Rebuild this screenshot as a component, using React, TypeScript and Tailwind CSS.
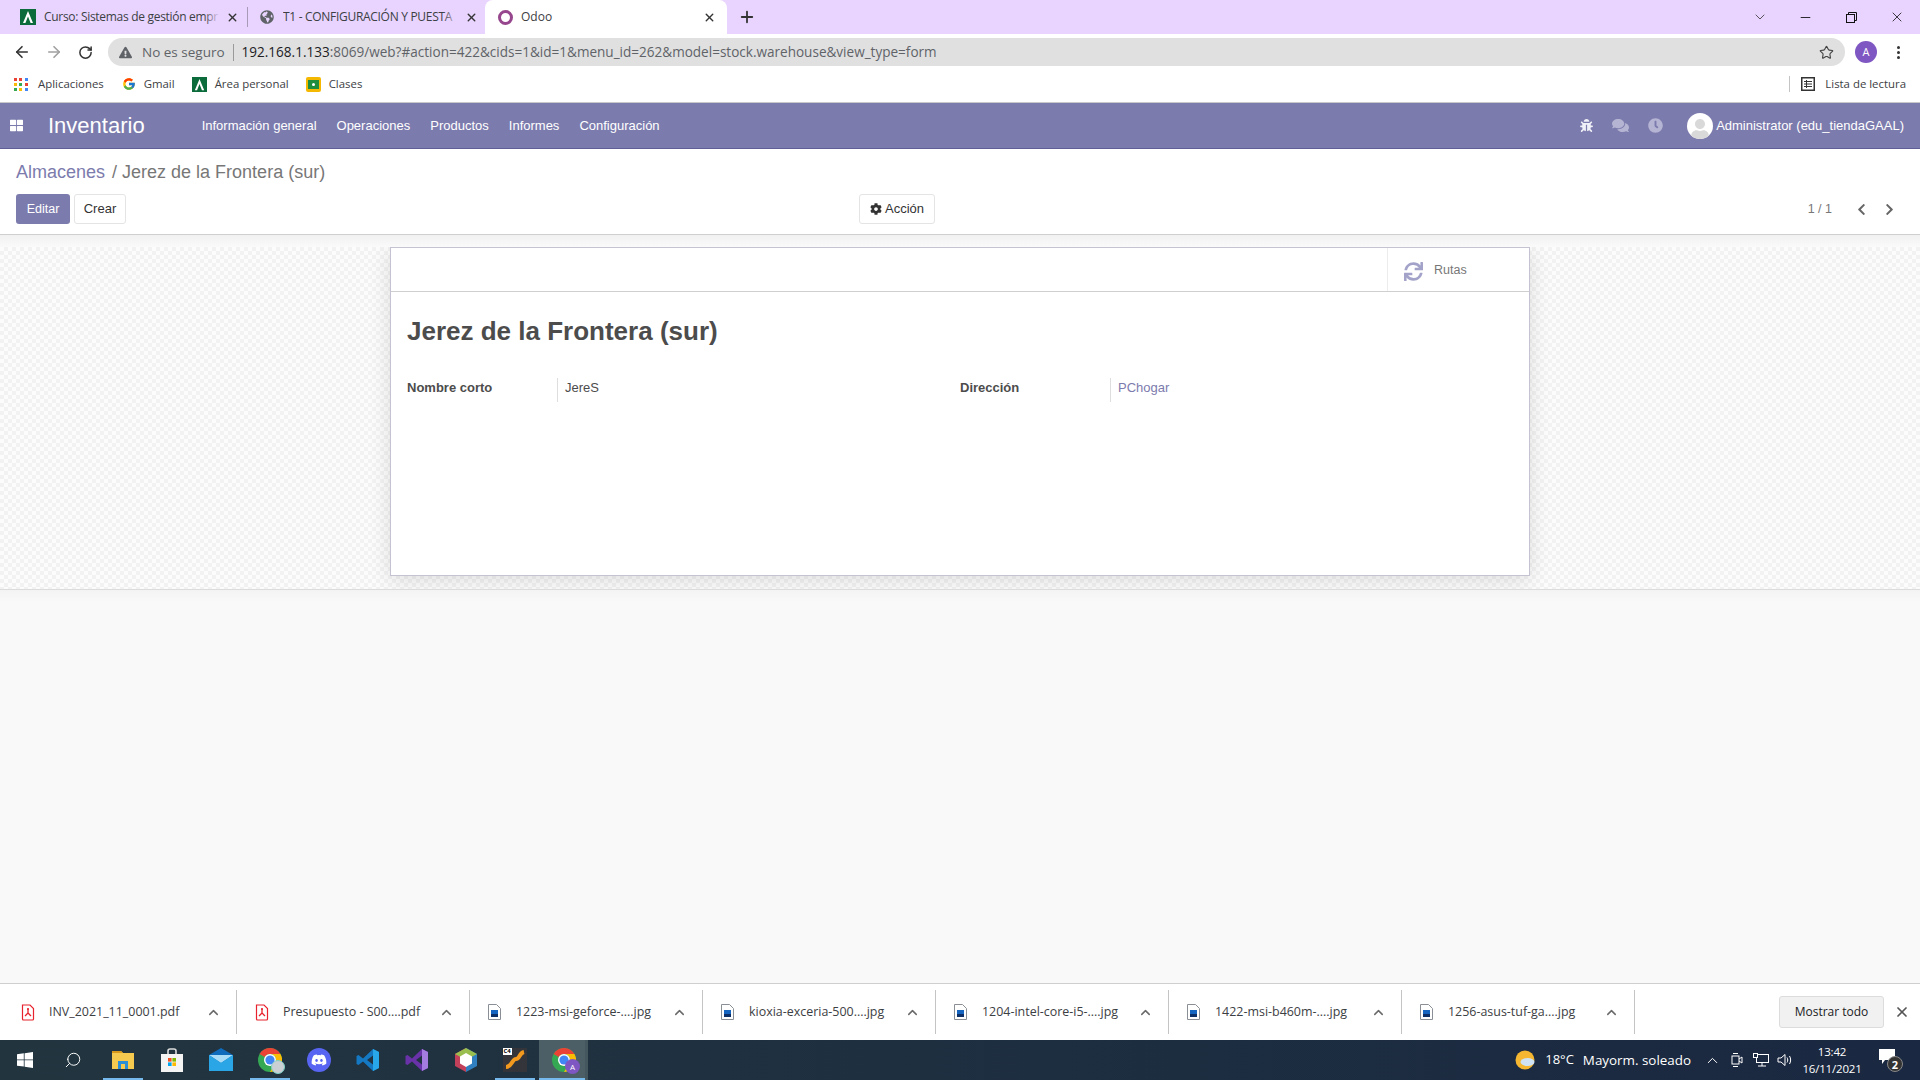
import { ChevronDown, ChevronUp, Minus, X, ArrowLeft, ArrowRight, RotateCw, Star, Plus, Search } from 'lucide-react';
import { FaBug, FaComments, FaClock, FaCog, FaSync, FaThLarge, FaChevronLeft, FaChevronRight, FaDiscord, FaUser, FaExclamationTriangle, FaGlobeAmericas } from 'react-icons/fa';
import { FcGoogle } from 'react-icons/fc';

const chrome = { fontFamily: '"Open Sans", "Noto Sans", sans-serif' };

const AulaIcon = ({ size = 16 }: { size?: number }) => (
  <svg width={size} height={size} viewBox="0 0 16 16">
    <rect width="16" height="16" fill="#0b6b3a" />
    <path d="M8 2 L13 14 H10.6 L8 7.5 L5.4 14 H3 Z" fill="#fff" />
  </svg>
);

const Tab = ({ icon, title, className }: { icon: React.ReactNode; title: string; className: string }) => (
  <div className={className}>
    <span className="mr-[8px] flex w-[16px] shrink-0 justify-center">{icon}</span>
    <span className="relative flex-1 overflow-hidden whitespace-nowrap text-[12px] tracking-[-0.3px] text-[#3c4043]">
      {title}
      <span className="absolute bottom-0 right-0 top-0 w-[16px] bg-gradient-to-r from-transparent to-[#e8d4ff]" />
    </span>
    <X size={13} strokeWidth={2.6} className="ml-[6px] shrink-0 text-[#333]" />
  </div>
);

const PdfIcon = () => (
  <svg width="14" height="17" viewBox="0 0 14 17" fill="none">
    <path d="M1.5 1 H9 L12.5 4.5 V15 a1 1 0 0 1 -1 1 H2.5 a1 1 0 0 1 -1 -1 Z" stroke="#e8222c" strokeWidth="1.2" fill="#fff" />
    <path d="M7 4.5 L7 9 M7 9 L4 12 M7 9 L10 12" stroke="#e8222c" strokeWidth="1.3" />
    <circle cx="7" cy="5" r="1" fill="#e8222c" />
  </svg>
);

const ImageFileIcon = () => (
  <svg width="13" height="16" viewBox="0 0 13 16" fill="none">
    <path d="M0.5 0.5 H8.5 L12.5 4.5 V15.5 H0.5 Z" fill="#fff" stroke="#8a8f96" />
    <rect x="3" y="6" width="7" height="7" fill="#1565c0" />
    <rect x="3" y="10" width="7" height="3" fill="#0b2f66" />
  </svg>
);

const DownloadItem = ({ name, pdf, first }: { name: string; pdf?: boolean; first?: boolean }) => (
  <div className={first ? 'flex h-[44px] w-[237px] shrink-0 items-center border-r border-[#c4c4c4] pl-[21px] pr-[15px]' : 'flex h-[44px] w-[233px] shrink-0 items-center border-r border-[#c4c4c4] pl-[18px] pr-[15px]'}>
    <span className={first ? 'flex w-[28px] shrink-0' : 'flex w-[28px] shrink-0'}>{pdf ? <PdfIcon /> : <ImageFileIcon />}</span>
    <span className="flex-1 whitespace-nowrap text-[12.45px] text-[#3c4043]">{name}</span>
    <ChevronUp size={15} strokeWidth={2.4} className="text-[#6a6a6a]" />
  </div>
);

const ChromeLogo = ({ children }: { children?: React.ReactNode }) => (
  <span className="relative block h-[24px] w-[24px]">
    <svg width="24" height="24" viewBox="0 0 24 24">
      <circle cx="12" cy="12" r="12" fill="#34a853" />
      <path d="M1.6 6 A12 12 0 0 1 22.4 6 H12 A6 6 0 0 0 6.8 9 Z" fill="#ea4335" />
      <path d="M22.4 6 A12 12 0 0 1 12 24 L17.2 15 A6 6 0 0 0 12 6 Z" fill="#fbbc05" />
      <circle cx="12" cy="12" r="6" fill="#fff" />
      <circle cx="12" cy="12" r="4.6" fill="#4285f4" />
    </svg>
    {children}
  </span>
);

const TaskbarSlot = ({ children, open }: { children: React.ReactNode; open?: boolean }) => (
  <div className="relative flex h-[40px] w-[49px] items-center justify-center">
    {children}
    {open && <span className="absolute bottom-0 left-[5px] right-[4px] h-[2px] bg-[#76b9ed]" />}
  </div>
);

export default function App() {
  return (
    <div className="flex h-[1080px] w-[1920px] flex-col overflow-hidden bg-[#f9f9f9]" style={chrome}>
      {/* tab strip */}
      <div className="flex h-[34px] shrink-0 items-center bg-[#e8d4ff]">
        <Tab className="flex h-[34px] w-[247px] items-center pl-[20px] pr-[8px]" icon={<AulaIcon />} title="Curso: Sistemas de gestión empr" />
        <div className="h-[20px] w-px bg-[#a99bb8]" />
        <Tab className="flex h-[34px] w-[237px] items-center pl-[11px] pr-[7px]" icon={<FaGlobeAmericas size={14} className="text-[#5f6368]" />} title="T1 - CONFIGURACIÓN Y PUESTA" />
        <div className="flex h-[34px] w-[242px] items-center rounded-t-lg bg-white pl-[12px] pr-[11px]">
          <span className="mr-[8px] flex w-[16px] shrink-0 justify-center">
            <span className="block h-[15px] w-[15px] rounded-full border-[3px] border-[#96468c]" />
          </span>
          <span className="flex-1 text-[12px] text-[#3c4043]">Odoo</span>
          <X size={13} strokeWidth={2.6} className="text-[#333]" />
        </div>
        <Plus size={18} strokeWidth={2.4} className="ml-[11px] text-[#333]" />
        <div className="flex-1" />
        <ChevronDown size={16} strokeWidth={1.2} className="mr-[30px] text-[#333]" />
        <Minus size={15} strokeWidth={1.4} className="mr-[33px] text-[#111]" />
        <svg width="11" height="11" viewBox="0 0 11 11" fill="none" stroke="#111" className="mr-[32px]">
          <rect x="0.5" y="2.5" width="8" height="8" />
          <path d="M2.5 2.5 V0.5 H10.5 V8.5 H8.5" />
        </svg>
        <X size={16} strokeWidth={1.2} className="mr-[15px] text-[#111]" />
      </div>

      {/* toolbar */}
      <div className="flex h-[34px] shrink-0 items-center bg-white pt-[2px]">
        <ArrowLeft size={18} strokeWidth={2.2} className="ml-[13px] text-[#333]" />
        <ArrowRight size={18} strokeWidth={2.2} className="ml-[14px] text-[#a0a0a0]" />
        <RotateCw size={15} strokeWidth={2.4} className="ml-[15px] text-[#333]" />
        <div className="ml-[15px] flex h-[28px] w-[1737px] items-center rounded-full bg-[#e0e0e0] pl-[11px] pr-[11px]">
          <FaExclamationTriangle size={13} className="text-[#5f6368]" />
          <span className="ml-[10px] text-[13.5px] text-[#5f6368]">No es seguro</span>
          <span className="ml-[8px] h-[17px] w-px bg-[#9a9a9a]" />
          <span className="ml-[8px] flex-1 whitespace-nowrap text-[13.55px] text-[#5f6368]">
            <span className="text-[#202124]">192.168.1.133</span>:8069/web?#action=422&cids=1&id=1&menu_id=262&model=stock.warehouse&view_type=form
          </span>
          <Star size={15} strokeWidth={1.8} className="text-[#444]" />
        </div>
        <div className="ml-[10px] flex h-[22px] w-[22px] items-center justify-center rounded-full bg-[#7e57c2] text-[11px] text-white">A</div>
        <div className="ml-[20px] flex flex-col gap-[2px]">
          <span className="h-[3px] w-[3px] rounded-full bg-[#333]" />
          <span className="h-[3px] w-[3px] rounded-full bg-[#333]" />
          <span className="h-[3px] w-[3px] rounded-full bg-[#333]" />
        </div>
      </div>

      {/* bookmarks */}
      <div className="flex h-[35px] shrink-0 items-center border-b border-[#c8c8c8] bg-white pb-[2px] pl-[14px] text-[11.4px] text-[#3c4043]">
        <div className="grid w-[14px] grid-cols-3 gap-[2px]">
          {['#ea4335', '#ea4335', '#4285f4', '#fbbc05', '#34a853', '#ea4335', '#34a853', '#fbbc05', '#4285f4'].map((c, i) => (
            <span key={i} className="h-[3px] w-[3px]" style={{ backgroundColor: c }} />
          ))}
        </div>
        <span className="ml-[10px]">Aplicaciones</span>
        <FcGoogle size={14} className="ml-[18px]" />
        <span className="ml-[8px]">Gmail</span>
        <span className="ml-[17px]"><AulaIcon size={15} /></span>
        <span className="ml-[8px]">Área personal</span>
        <span className="ml-[17px] flex h-[15px] w-[15px] items-center justify-center rounded-[2px] bg-[#f5b800]">
          <span className="flex h-[9px] w-[11px] items-center justify-center bg-[#1e8e3e]">
            <span className="h-[3px] w-[3px] rounded-full bg-white" />
          </span>
        </span>
        <span className="ml-[8px]">Clases</span>
        <div className="flex-1" />
        <span className="h-[16px] w-px bg-[#c4c4c4]" />
        <svg width="14" height="14" viewBox="0 0 14 14" fill="none" stroke="#333" className="ml-[11px]">
          <rect x="0.75" y="0.75" width="12.5" height="12.5" strokeWidth="1.5" />
          <path d="M3 4.5 H11 M3 7 H11 M3 9.5 H11 M5.5 3 V11" />
        </svg>
        <span className="ml-[10px] mr-[14px]">Lista de lectura</span>
      </div>

      {/* odoo navbar */}
      <div className="flex h-[46px] shrink-0 items-center border-b border-[#5f5e97] bg-[#7c7bad] font-['Liberation_Sans',sans-serif] text-white">
        <FaThLarge size={13} className="ml-[10px]" />
        <span className="ml-[25px] text-[22px] leading-none">Inventario</span>
        <nav className="ml-[57px] flex gap-[20px] text-[13px]">
          <span>Información general</span>
          <span>Operaciones</span>
          <span>Productos</span>
          <span>Informes</span>
          <span>Configuración</span>
        </nav>
        <div className="flex-1" />
        <FaBug size={13} className="text-[#f0f0f8]" />
        <FaComments size={17} className="ml-[19px] text-[#b5b4d3]" />
        <FaClock size={15} className="ml-[19px] text-[#b5b4d3]" />
        <span className="ml-[24px] flex h-[26px] w-[26px] items-end justify-center overflow-hidden rounded-full bg-white">
          <FaUser size={20} className="text-[#d9d9d9]" />
        </span>
        <span className="ml-[3px] mr-[16px] text-[13px]">Administrator (edu_tiendaGAAL)</span>
      </div>

      {/* control panel */}
      <div className="flex h-[86px] shrink-0 flex-col border-b border-[#cfcfcf] bg-white px-[16px] font-['Liberation_Sans',sans-serif]">
        <div className="mt-[10px] text-[18px] leading-[26px] text-[#777]">
          <span className="text-[#7c7bad]">Almacenes</span>
          <span className="ml-[7px] mr-[5px]">/</span>
          Jerez de la Frontera (sur)
        </div>
        <div className="mt-[9px] flex items-center text-[12.5px]">
          <button className="h-[30px] w-[54px] rounded-[3px] bg-[#7c7bad] text-white">Editar</button>
          <button className="ml-[4px] h-[30px] w-[52px] rounded-[3px] border border-[#e4e4e4] text-[13px] text-[#333]">Crear</button>
          <button className="ml-[733px] flex h-[30px] w-[76px] items-center justify-center gap-[3px] rounded-[3px] border border-[#e4e4e4] text-[13px] text-[#333]">
            <FaCog size={12} />
            Acción
          </button>
          <div className="flex-1" />
          <span className="text-[#777]">1 / 1</span>
          <FaChevronLeft size={13} className="ml-[23px] text-[#666]" />
          <FaChevronRight size={13} className="ml-[15px] mr-[8px] text-[#666]" />
        </div>
      </div>

      {/* form sheet */}
      <div className="flex h-[355px] shrink-0 flex-col border-b border-[#dcdcdc] font-['Liberation_Sans',sans-serif]">
        <div className="h-[12px] shrink-0 bg-gradient-to-b from-[#f1f1f1] to-[#fafafa]" />
        <div className="flex-1 overflow-hidden bg-[repeating-conic-gradient(#f2f2f2_0%_25%,#fcfcfc_0%_50%)] bg-[length:8px_8px]">
          <div className="mx-auto h-[329px] w-[1140px] border border-[#c5c2d2] bg-white shadow-[0_4px_20px_rgba(0,0,0,0.12)]">
            <div className="flex h-[44px] justify-end border-b border-[#cfcfcf]">
              <div className="flex w-[142px] items-center border-l border-[#ececec] pl-[16px] text-[12.5px] text-[#777]">
                <FaSync size={19} className="mt-[3px] text-[#a3a3ca]" />
                <span className="ml-[11px] mt-[1px]">Rutas</span>
              </div>
            </div>
            <div className="px-[16px]">
              <h1 className="mt-[22px] text-[26px] font-bold leading-[34px] text-[#4c4c4c]">Jerez de la Frontera (sur)</h1>
              <div className="mt-[30px] flex h-[24px] items-start text-[13px] leading-[20px] text-[#4c4c4c]">
                <span className="w-[150px] font-bold">Nombre corto</span>
                <span className="h-[24px] w-px bg-[#dedede]" />
                <span className="ml-[7px] w-[395px]">JereS</span>
                <span className="w-[150px] font-bold">Dirección</span>
                <span className="h-[24px] w-px bg-[#dedede]" />
                <span className="ml-[7px] text-[#7c7bad]">PChogar</span>
              </div>
            </div>
          </div>
        </div>
      </div>

      <div className="flex-1 bg-[linear-gradient(#f3f3f3,#f9f9f9_12px)]" />

      {/* downloads */}
      <div className="flex h-[57px] shrink-0 items-center border-t border-[#cfcfcf] bg-white">
        <DownloadItem first pdf name="INV_2021_11_0001.pdf" />
        <DownloadItem pdf name="Presupuesto - S00....pdf" />
        <DownloadItem name="1223-msi-geforce-....jpg" />
        <DownloadItem name="kioxia-exceria-500....jpg" />
        <DownloadItem name="1204-intel-core-i5-....jpg" />
        <DownloadItem name="1422-msi-b460m-....jpg" />
        <DownloadItem name="1256-asus-tuf-ga....jpg" />
        <div className="flex-1" />
        <button className="h-[32px] w-[105px] rounded-[3px] border border-[#dcdcdc] bg-[#f1f1f1] text-[12px] text-[#202124]">Mostrar todo</button>
        <X size={16} strokeWidth={2.6} className="ml-[10px] mr-[10px] text-[#555]" />
      </div>

      {/* taskbar */}
      <div className="flex h-[40px] shrink-0 items-center bg-gradient-to-r from-[#22353f] to-[#1a2841] text-white">
        <div className="flex w-[49px] justify-center">
          <svg width="16" height="16" viewBox="0 0 16 16" fill="#fff">
            <path d="M0 2.2 L6.8 1.3 V7.5 H0 Z M7.6 1.2 L16 0 V7.5 H7.6 Z M0 8.3 H6.8 V14.6 L0 13.7 Z M7.6 8.3 H16 V16 L7.6 14.8 Z" />
          </svg>
        </div>
        <div className="flex w-[49px] justify-center pr-[2px]">
          <Search size={18} strokeWidth={1.3} className="-scale-x-100" />
        </div>
        <TaskbarSlot open>
          <svg width="22" height="22" viewBox="0 0 22 22">
            <path d="M0 2 H9 L11 4 H22 V20 H0 Z" fill="#f6c94f" />
            <path d="M0 2 H9 L11 4 H0 Z" fill="#d99a1c" />
            <path d="M6 20 V12 H16 V20 H13 V15 H9 V20 Z" fill="#2a8fd6" />
          </svg>
        </TaskbarSlot>
        <TaskbarSlot>
          <svg width="24" height="24" viewBox="0 0 24 24">
            <path d="M8 6 V3 a2 2 0 0 1 2 -2 h4 a2 2 0 0 1 2 2 V6" stroke="#ddd" strokeWidth="1.6" fill="none" />
            <rect x="1" y="6" width="22" height="18" fill="#f4f4f4" />
            <rect x="8" y="10" width="3.6" height="3.6" fill="#f25022" />
            <rect x="12.4" y="10" width="3.6" height="3.6" fill="#7fba00" />
            <rect x="8" y="14.4" width="3.6" height="3.6" fill="#00a4ef" />
            <rect x="12.4" y="14.4" width="3.6" height="3.6" fill="#ffb900" />
          </svg>
        </TaskbarSlot>
        <TaskbarSlot>
          <svg width="24" height="24" viewBox="0 0 24 24">
            <path d="M0 7 L12 0 L24 7 V23 H0 Z" fill="#0f6cbd" />
            <path d="M0 7 H24 L12 15 Z" fill="#a8dcf7" />
            <path d="M0 7 V23 H24 V7 L12 15 Z" fill="#2aa6e6" />
          </svg>
        </TaskbarSlot>
        <TaskbarSlot open>
          <ChromeLogo>
            <span className="absolute -bottom-[2px] -right-[3px] h-[14px] w-[14px] rounded-full border border-[#7fd0c8] bg-[#c9cfd3]" />
          </ChromeLogo>
        </TaskbarSlot>
        <TaskbarSlot>
          <span className="flex h-[24px] w-[24px] items-center justify-center rounded-full bg-[#5865f2]">
            <FaDiscord size={16} className="text-white" />
          </span>
        </TaskbarSlot>
        <TaskbarSlot>
          <svg width="24" height="24" viewBox="0 0 24 24">
            <path d="M17 1 L23 4 V20 L17 23 L7 13.5 L2.5 17 L0.5 16 V8 L2.5 7 L7 10.5 Z M17 7.5 L11 12 L17 16.5 Z" fill="#1578c2" fillRule="evenodd" />
            <path d="M17 1 L23 4 V20 L17 23 Z" fill="#28a8ea" />
          </svg>
        </TaskbarSlot>
        <TaskbarSlot>
          <svg width="24" height="24" viewBox="0 0 24 24">
            <path d="M17 1 L23 4 V20 L17 23 L7 13.5 L2.5 17 L0.5 16 V8 L2.5 7 L7 10.5 Z M17 7.5 L11 12 L17 16.5 Z" fill="#6a32a8" fillRule="evenodd" />
            <path d="M17 1 L23 4 V20 L17 23 Z" fill="#a47ce0" />
          </svg>
        </TaskbarSlot>
        <TaskbarSlot>
          <svg width="22" height="24" viewBox="0 0 22 24">
            <path d="M11 0 L22 6 V18 L11 24 Z" fill="#2f7fc1" />
            <path d="M11 0 L0 6 V18 L11 24 Z" fill="#c2405a" />
            <path d="M11 0 L22 6 L11 12 L0 6 Z" fill="#9bbf4f" />
            <path d="M11 5 L17 8.5 V15.5 L11 19 L5 15.5 V8.5 Z" fill="#fff" />
          </svg>
        </TaskbarSlot>
        <TaskbarSlot open>
          <span className="relative flex h-[24px] w-[24px] items-center justify-center bg-[#33353a]">
            <svg width="22" height="20" viewBox="0 0 22 20" fill="none">
              <path d="M2 17 C8 17 8 9 12 9 C16 9 15 3 20 2" stroke="#f39a1e" strokeWidth="4" />
            </svg>
            <span className="absolute left-0 top-0 bg-white px-[1px] text-[6px] font-bold leading-[7px] text-black">C4</span>
          </span>
        </TaskbarSlot>
        <div className="relative flex h-[40px] w-[46px] items-center justify-center bg-[#4c5f66] pl-[4px]">
          <ChromeLogo>
            <span className="absolute -bottom-[2px] -right-[4px] flex h-[15px] w-[15px] items-center justify-center rounded-full bg-[#7e57c2] text-[8px] text-white">A</span>
          </ChromeLogo>
          <span className="absolute bottom-0 left-0 right-0 h-[2px] bg-[#76b9ed]" />
        </div>
        <div className="h-[40px] w-[3px] bg-[#44565e]" />

        <div className="flex-1" />

        <svg width="20" height="20" viewBox="0 0 20 20">
          <circle cx="10" cy="10" r="9.5" fill="#f5b731" />
          <ellipse cx="12.5" cy="12" rx="7" ry="4" fill="#cfe3f5" />
        </svg>
        <span className="ml-[10px] text-[13px]">18°C</span>
        <span className="ml-[9px] text-[13.4px]">Mayorm. soleado</span>
        <ChevronUp size={17} strokeWidth={1.4} className="ml-[13px]" />
        <svg width="12" height="16" viewBox="0 0 12 16" fill="none" stroke="#fff" className="ml-[10px]">
          <rect x="1" y="4" width="7" height="8" />
          <path d="M8 7 L11 5 V11 L8 9 M2 1.5 H7 M2 14.5 H7" />
        </svg>
        <svg width="16" height="14" viewBox="0 0 16 14" fill="none" stroke="#fff" className="ml-[10px]">
          <rect x="3.5" y="1.5" width="12" height="8" />
          <rect x="0.5" y="0.5" width="4" height="4" fill="#1b2a41" />
          <path d="M9 9.5 V13 M5 13 H13" />
        </svg>
        <svg width="15" height="14" viewBox="0 0 15 14" fill="none" stroke="#fff" className="ml-[8px]">
          <path d="M1 5 H4 L8 1.5 V12.5 L4 9 H1 Z" />
          <path d="M10 4.5 C11 6 11 8 10 9.5 M12.5 3 C14 5.5 14 8.5 12.5 11" />
        </svg>
        <div className="ml-[9px] flex w-[62px] flex-col items-center text-[11.5px] leading-[17px] tracking-[-0.2px]">
          <span>13:42</span>
          <span>16/11/2021</span>
        </div>
        <span className="relative ml-[16px] mr-[19px] block h-[22px] w-[22px]">
          <svg width="17" height="15" viewBox="0 0 17 15" fill="#fff">
            <path d="M0 0 H16 V11 H6 L3 15 V11 H0 Z" />
          </svg>
          <span className="absolute -bottom-[1px] -right-[2px] flex h-[16px] w-[16px] items-center justify-center rounded-full border border-[#888] bg-[#333] text-[11px] font-bold leading-none">2</span>
        </span>
      </div>
    </div>
  );
}
